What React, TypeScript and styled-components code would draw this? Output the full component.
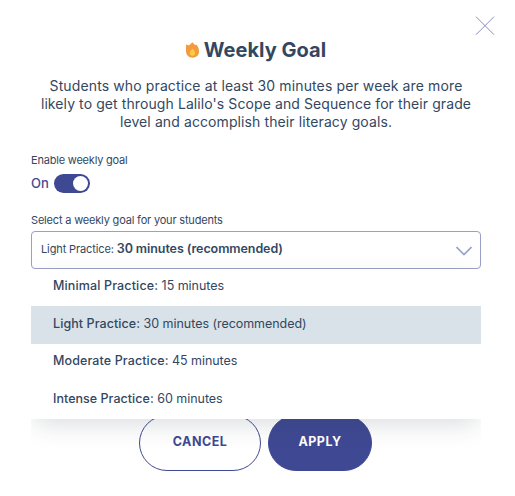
import React from 'react';
import styled, { createGlobalStyle } from 'styled-components';

const Global = createGlobalStyle`
  * { box-sizing: border-box; }
  body { margin: 0; background: #fff; color: #33475f; font-family: Inter, "Open Sans", sans-serif; }
  button { font: inherit; }
`;

const Modal = styled.main`
  position: relative;
  width: 515px;
  height: 496px;
  padding: 38px 34px 0 31px;
  background: #fff;
`;

const CloseButton = styled.button`
  position: absolute;
  top: 16px;
  right: 20px;
  width: 20px;
  height: 20px;
  padding: 0;
  border: 0;
  background: none;
  svg { display: block; }
`;

const Body = styled.section`
  height: 458px;
  overflow: hidden;
`;

const Title = styled.h1`
  display: flex;
  justify-content: center;
  align-items: center;
  gap: 4px;
  height: 24px;
  margin: 0;
  padding-right: 1px;
  font-size: 20px;
  line-height: 24px;
  font-weight: 650;
`;

const Fit = styled.span<{ $spacing: number }>`
  letter-spacing: ${(p) => p.$spacing}px;
`;

const Description = styled.p`
  display: flex;
  flex-direction: column;
  align-items: center;
  margin: 15px 0 0;
  font-size: 14px;
  line-height: 18px;
  white-space: nowrap;
`;

const Label = styled.div<{ $top: number }>`
  height: 14px;
  margin-top: ${(p) => p.$top}px;
  font-size: 11px;
  line-height: 14px;
`;

const ToggleRow = styled.div`
  display: flex;
  align-items: center;
  height: 19px;
  margin-top: 7px;
  color: #3f4993;
  font-size: 13px;
  font-weight: 500;
`;

const ToggleText = styled.span`
  width: 23px;
  line-height: 18px;
  margin-top: -1px;
`;

const Switch = styled.span`
  display: flex;
  justify-content: flex-end;
  width: 36px;
  height: 19px;
  padding: 2px;
  border-radius: 10px;
  background: #3f4993;
  &::after { content: ''; width: 15px; height: 15px; border-radius: 50%; background: #fff; }
`;

const SelectArea = styled.div`
  position: relative;
  margin-top: 4px;
`;

const SelectBox = styled.div`
  display: flex;
  align-items: center;
  justify-content: space-between;
  height: 38px;
  padding: 0 8px 3px 9px;
  border: 1px solid #999fc9;
  border-radius: 4px;
  font-size: 11px;
  white-space: pre;
  strong { font-size: 12.5px; font-weight: 600; }
  svg { margin-top: 5px; }
`;

const Menu = styled.div`
  position: absolute;
  top: 38px;
  left: 0;
  width: 100%;
  background: #fff;
  box-shadow: 0 8px 24px -4px rgba(40, 50, 60, 0.18);
`;

const Option = styled.div<{ $selected?: boolean }>`
  height: ${(p) => (p.$selected ? 38 : 37)}px;
  padding-left: 22px;
  background: ${(p) => (p.$selected ? '#d8e2e8' : '#fff')};
  font-size: 12.5px;
  line-height: 35px;
  white-space: pre;
  strong { font-weight: 550; }
  &:first-child, &:nth-child(3) { line-height: 34px; }
  &:last-child { height: 38px; }
`;

const Actions = styled.div`
  display: flex;
  justify-content: center;
  gap: 7px;
  margin-top: 146px;
  padding-right: 2px;
`;

const Action = styled.button<{ $primary?: boolean }>`
  width: ${(p) => (p.$primary ? 104 : 122)}px;
  height: 56px;
  padding: 0 0 3px 1px;
  border: 1px solid #3f4993;
  border-radius: 28px;
  background: ${(p) => (p.$primary ? '#3f4993' : '#fff')};
  color: ${(p) => (p.$primary ? '#fff' : '#3f4993')};
  font-size: 12.5px;
  font-weight: 700;
`;

const Flame = () => (
  <svg width="15" height="16" viewBox="0 0 15 16" aria-hidden="true">
    <path d="M1 2.5 4 3.5 7.4 0.3 10 3 11.5 2.8C13.6 5 14.2 8 14 10.3 13.5 13.6 11 15.7 7.7 15.7 3.8 15.7 1 13 1 9Z" fill="#f49a3f" />
    <path d="M7.5 6.8C9 8.3 10.2 9.6 10.2 11.3 10.2 12.8 9.1 13.8 7.5 13.8S4.8 12.8 4.8 11.3C4.8 9.6 6.1 8.3 7.5 6.8Z" fill="#f7cd45" />
  </svg>
);

const options = [
  { name: 'Minimal Practice:', time: ' 15 minutes', ns: 0.14, ts: -0.05 },
  { name: 'Light Practice:', time: ' 30 minutes (recommended)', ns: 0.08, ts: -0.04, selected: true },
  { name: 'Moderate Practice:', time: ' 45 minutes', ns: 0.11, ts: -0.05 },
  { name: 'Intense Practice:', time: ' 60 minutes', ns: 0.03, ts: -0.03 },
];

export default function App() {
  return (
    <>
      <Global />
      <Modal>
        <CloseButton aria-label="Close">
          <svg width="20" height="20" viewBox="0 0 20 20" fill="none" stroke="#888fc0">
            <path d="M1 0.7 19 18.7M19 0.7 1 18.7" />
          </svg>
        </CloseButton>
        <Body>
          <Title><Flame /><Fit $spacing={0.02}>Weekly Goal</Fit></Title>
          <Description>
            <Fit $spacing={0.12}>Students who practice at least 30 minutes per week are more</Fit>
            <Fit $spacing={0.09}>likely to get through Lalilo's Scope and Sequence for their grade</Fit>
            <Fit $spacing={0.1}>level and accomplish their literacy goals.</Fit>
          </Description>
          <Label $top={22}><Fit $spacing={-0.2}>Enable weekly goal</Fit></Label>
          <ToggleRow><ToggleText>On</ToggleText><Switch role="switch" aria-checked="true" /></ToggleRow>
          <Label $top={20}><Fit $spacing={-0.18}>Select a weekly goal for your students</Fit></Label>
          <SelectArea>
            <SelectBox>
              <span><Fit $spacing={-0.12}>Light Practice: </Fit><strong><Fit $spacing={-0.08}>30 minutes (recommended)</Fit></strong></span>
              <svg width="16" height="10" viewBox="0 0 16 10" fill="none" stroke="#999fc9" strokeWidth="1.6">
                <path d="M0.5 1 8 8.5 15.5 1" />
              </svg>
            </SelectBox>
            <Menu>
              {options.map((o) => (
                <Option key={o.name} $selected={o.selected}>
                  <strong><Fit $spacing={o.ns}>{o.name}</Fit></strong><Fit $spacing={o.ts}>{o.time}</Fit>
                </Option>
              ))}
            </Menu>
          </SelectArea>
          <Actions>
            <Action><Fit $spacing={0.5}>CANCEL</Fit></Action>
            <Action $primary><Fit $spacing={0.5}>APPLY</Fit></Action>
          </Actions>
        </Body>
      </Modal>
    </>
  );
}
